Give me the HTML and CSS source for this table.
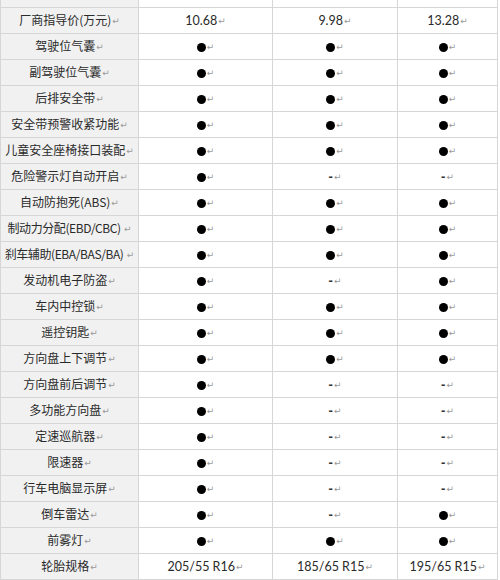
FILE: index.html
```html
<!DOCTYPE html>
<html lang="zh">
<head>
<meta charset="utf-8">
<link rel="stylesheet" href="styles.css">
</head>
<body>
<table class="spec">
  <colgroup>
    <col class="c-label"><col class="c-a"><col class="c-b"><col class="c-c"><col class="c-edge">
  </colgroup>
  <tbody>
    <tr class="head"><td class="label"></td><td></td><td>经典时尚版<i class="ret">↵</i></td><td>豪华版<i class="ret">↵</i></td><td class="edge"></td></tr>
    <tr><td class="label">厂商指导价(万元)<i class="ret">↵</i></td><td><span class="num">10.68</span><i class="ret">↵</i></td><td><span class="num">9.98</span><i class="ret">↵</i></td><td><span class="num">13.28</span><i class="ret">↵</i></td><td class="edge"></td></tr>
    <tr><td class="label">驾驶位气囊<i class="ret">↵</i></td><td><span class="dot"></span><i class="ret">↵</i></td><td><span class="dot"></span><i class="ret">↵</i></td><td><span class="dot"></span><i class="ret">↵</i></td><td class="edge"></td></tr>
    <tr><td class="label">副驾驶位气囊<i class="ret">↵</i></td><td><span class="dot"></span><i class="ret">↵</i></td><td><span class="dot"></span><i class="ret">↵</i></td><td><span class="dot"></span><i class="ret">↵</i></td><td class="edge"></td></tr>
    <tr><td class="label">后排安全带<i class="ret">↵</i></td><td><span class="dot"></span><i class="ret">↵</i></td><td><span class="dot"></span><i class="ret">↵</i></td><td><span class="dot"></span><i class="ret">↵</i></td><td class="edge"></td></tr>
    <tr><td class="label">安全带预警收紧功能<i class="ret">↵</i></td><td><span class="dot"></span><i class="ret">↵</i></td><td><span class="dot"></span><i class="ret">↵</i></td><td><span class="dot"></span><i class="ret">↵</i></td><td class="edge"></td></tr>
    <tr><td class="label">儿童安全座椅接口装配<i class="ret">↵</i></td><td><span class="dot"></span><i class="ret">↵</i></td><td><span class="dot"></span><i class="ret">↵</i></td><td><span class="dot"></span><i class="ret">↵</i></td><td class="edge"></td></tr>
    <tr><td class="label">危险警示灯自动开启<i class="ret">↵</i></td><td><span class="dot"></span><i class="ret">↵</i></td><td><span class="dash">-</span><i class="ret">↵</i></td><td><span class="dash">-</span><i class="ret">↵</i></td><td class="edge"></td></tr>
    <tr><td class="label">自动防抱死(ABS)<i class="ret">↵</i></td><td><span class="dot"></span><i class="ret">↵</i></td><td><span class="dot"></span><i class="ret">↵</i></td><td><span class="dot"></span><i class="ret">↵</i></td><td class="edge"></td></tr>
    <tr><td class="label tight">制动力分配(EBD/CBC) <i class="ret">↵</i></td><td><span class="dot"></span><i class="ret">↵</i></td><td><span class="dot"></span><i class="ret">↵</i></td><td><span class="dot"></span><i class="ret">↵</i></td><td class="edge"></td></tr>
    <tr><td class="label tight">刹车辅助(EBA/BAS/BA) <i class="ret">↵</i></td><td><span class="dot"></span><i class="ret">↵</i></td><td><span class="dot"></span><i class="ret">↵</i></td><td><span class="dot"></span><i class="ret">↵</i></td><td class="edge"></td></tr>
    <tr><td class="label">发动机电子防盗<i class="ret">↵</i></td><td><span class="dot"></span><i class="ret">↵</i></td><td><span class="dash">-</span><i class="ret">↵</i></td><td><span class="dot"></span><i class="ret">↵</i></td><td class="edge"></td></tr>
    <tr><td class="label">车内中控锁<i class="ret">↵</i></td><td><span class="dot"></span><i class="ret">↵</i></td><td><span class="dot"></span><i class="ret">↵</i></td><td><span class="dot"></span><i class="ret">↵</i></td><td class="edge"></td></tr>
    <tr><td class="label">遥控钥匙<i class="ret">↵</i></td><td><span class="dot"></span><i class="ret">↵</i></td><td><span class="dot"></span><i class="ret">↵</i></td><td><span class="dot"></span><i class="ret">↵</i></td><td class="edge"></td></tr>
    <tr><td class="label">方向盘上下调节<i class="ret">↵</i></td><td><span class="dot"></span><i class="ret">↵</i></td><td><span class="dot"></span><i class="ret">↵</i></td><td><span class="dot"></span><i class="ret">↵</i></td><td class="edge"></td></tr>
    <tr><td class="label">方向盘前后调节<i class="ret">↵</i></td><td><span class="dot"></span><i class="ret">↵</i></td><td><span class="dash">-</span><i class="ret">↵</i></td><td><span class="dash">-</span><i class="ret">↵</i></td><td class="edge"></td></tr>
    <tr><td class="label">多功能方向盘<i class="ret">↵</i></td><td><span class="dot"></span><i class="ret">↵</i></td><td><span class="dash">-</span><i class="ret">↵</i></td><td><span class="dash">-</span><i class="ret">↵</i></td><td class="edge"></td></tr>
    <tr><td class="label">定速巡航器<i class="ret">↵</i></td><td><span class="dot"></span><i class="ret">↵</i></td><td><span class="dash">-</span><i class="ret">↵</i></td><td><span class="dash">-</span><i class="ret">↵</i></td><td class="edge"></td></tr>
    <tr><td class="label">限速器<i class="ret">↵</i></td><td><span class="dot"></span><i class="ret">↵</i></td><td><span class="dash">-</span><i class="ret">↵</i></td><td><span class="dash">-</span><i class="ret">↵</i></td><td class="edge"></td></tr>
    <tr><td class="label">行车电脑显示屏<i class="ret">↵</i></td><td><span class="dot"></span><i class="ret">↵</i></td><td><span class="dash">-</span><i class="ret">↵</i></td><td><span class="dash">-</span><i class="ret">↵</i></td><td class="edge"></td></tr>
    <tr><td class="label">倒车雷达<i class="ret">↵</i></td><td><span class="dot"></span><i class="ret">↵</i></td><td><span class="dash">-</span><i class="ret">↵</i></td><td><span class="dot"></span><i class="ret">↵</i></td><td class="edge"></td></tr>
    <tr><td class="label">前雾灯<i class="ret">↵</i></td><td><span class="dot"></span><i class="ret">↵</i></td><td><span class="dot"></span><i class="ret">↵</i></td><td><span class="dot"></span><i class="ret">↵</i></td><td class="edge"></td></tr>
    <tr><td class="label">轮胎规格<i class="ret">↵</i></td><td><span class="num">205/55 R16</span><i class="ret">↵</i></td><td><span class="num">185/65 R15</span><i class="ret">↵</i></td><td><span class="num">195/65 R15</span><i class="ret">↵</i></td><td class="edge"></td></tr>
  </tbody>
</table>
</body>
</html>
```
FILE: styles.css
```css
html, body {
  margin: 0;
  padding: 0;
  background: #ffffff;
}
body {
  width: 500px;
  height: 580px;
  overflow: hidden;
  font-family: "Noto Sans CJK SC", "Noto Sans", sans-serif;
  color: #222;
}
.spec {
  border-collapse: collapse;
  table-layout: fixed;
  width: 500px;
  margin-top: -19px;
}
.c-label { width: 138px; }
.c-a { width: 134px; }
.c-b { width: 125px; }
.c-c { width: 100px; }
.c-edge { width: 3px; }
.spec td {
  height: 25px;
  padding: 0;
  border: 1px solid #d6d6d6;
  text-align: center;
  vertical-align: middle;
  font-size: 12px;
  line-height: 14px;
  white-space: nowrap;
  overflow: hidden;
}
.spec td.label {
  background: #f1f1f1;
  letter-spacing: 0;
  color: #2a2a2a;
}
.spec td.label.tight {
  letter-spacing: -0.4px;
}
.spec td.edge {
  border: none;
  border-left: 1px solid #d6d6d6;
  background: #fff;
}
.num {
  font-family: "Lato", "Noto Sans", sans-serif;
  font-size: 12.5px;
  color: #2a2a2a;
}
.dot {
  display: inline-block;
  width: 9px;
  height: 9px;
  border-radius: 50%;
  background: #000;
  vertical-align: -1px;
}
.dash {
  font-family: "Liberation Sans", sans-serif;
  font-weight: bold;
  font-size: 13px;
  color: #333;
}
.ret {
  font-style: normal;
  font-family: "DejaVu Sans", sans-serif;
  font-size: 9px;
  color: #9a9a9a;
  margin-left: 1px;
  vertical-align: 1px;
  letter-spacing: 0;
}
```
